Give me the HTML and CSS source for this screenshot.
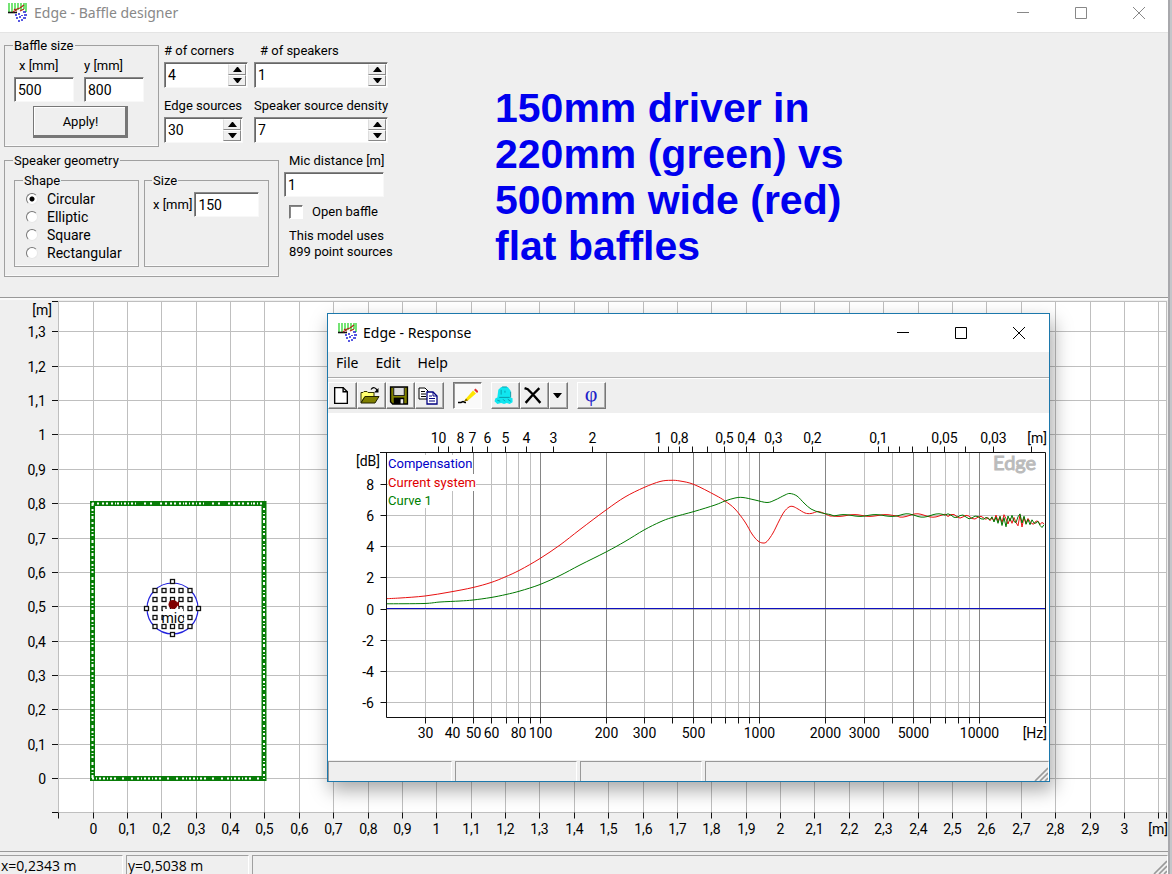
FILE: index.html
```html
<!DOCTYPE html>
<html lang="en">
<head>
<meta charset="utf-8">
<meta name="viewport" content="width=device-width, initial-scale=1">
<title>Edge - Baffle designer</title>
<link rel="stylesheet" href="styles.css">
</head>
<body>
<svg class="defs" aria-hidden="true">
  <symbol id="logo" viewBox="0 0 20 20">
    <path d="M1 0v9M4 0v9M7 0v7M10 0v7M13 0v7M16 0v6M18 0v9" stroke="#2bd52b" stroke-width="1.3"/>
    <path d="M0 9.500h9" stroke="#111" stroke-width="1.600"/>
    <path d="M5 9l4-3 3-1 4-3M6 6l3 2M12 8l4-2" stroke="#b02818" stroke-width="1.300" fill="none"/>
    <path d="M7 12h2M10 11h2M15 9h3M16 12h3M8 15h2M11 14h2M15 15h3M10 18h2M13 17h2M14 12v1" stroke="#2222d8" stroke-width="1.600"/>
  </symbol>
  <symbol id="min" viewBox="0 0 12 12"><path d="M0 5.500h12" stroke="currentColor"/></symbol>
  <symbol id="max" viewBox="0 0 12 12"><path d="M.5.500h11v11H.500z" fill="none" stroke="currentColor"/></symbol>
  <symbol id="close" viewBox="0 0 12 12"><path d="M0 0l12 12M12 0L0 12" stroke="currentColor"/></symbol>
  <symbol id="up" viewBox="0 0 9 5"><path d="M0 5h9L5 0H4z"/></symbol>
  <symbol id="down" viewBox="0 0 9 5"><path d="M0 0h9L5 5H4z"/></symbol>
  <symbol id="grip" viewBox="0 0 14 14"><path d="M1 14L14 1M6 14l8-8M11 14l3-3" stroke="#999" stroke-width="1.600"/></symbol>
</svg>

<main class="app">
  <header class="titlebar inactive">
    <svg class="logo"><use href="#logo"/></svg>
    <h1 class="title">Edge - Baffle designer</h1>
    <button class="winbtn" aria-label="Minimize"><svg><use href="#min"/></svg></button>
    <button class="winbtn" aria-label="Maximize"><svg><use href="#max"/></svg></button>
    <button class="winbtn" aria-label="Close"><svg><use href="#close"/></svg></button>
  </header>

  <form class="panel" onsubmit="return false">
    <div class="settings">
      <div class="row">
        <fieldset class="group baffle">
          <legend>Baffle size</legend>
          <div class="pair">
            <div class="dim"><label for="bx">x [mm]</label><input class="box" id="bx" value="500"></div>
            <div class="dim y"><label for="by">y [mm]</label><input class="box" id="by" value="800"></div>
          </div>
          <button class="apply">Apply!</button>
        </fieldset>
        <div class="spins">
          <div class="field">
            <label for="corners"># of corners</label>
            <div class="spin"><input id="corners" value="4"><span class="arrows"><button aria-label="More corners"><svg><use href="#up"/></svg></button><button aria-label="Fewer corners"><svg><use href="#down"/></svg></button></span></div>
          </div>
          <div class="field">
            <label class="indent" for="speakers"># of speakers</label>
            <div class="spin"><input id="speakers" value="1"><span class="arrows"><button aria-label="More speakers"><svg><use href="#up"/></svg></button><button aria-label="Fewer speakers"><svg><use href="#down"/></svg></button></span></div>
          </div>
          <div class="field">
            <label for="edges">Edge sources</label>
            <div class="spin narrow"><input id="edges" value="30"><span class="arrows"><button aria-label="More edge sources"><svg><use href="#up"/></svg></button><button aria-label="Fewer edge sources"><svg><use href="#down"/></svg></button></span></div>
          </div>
          <div class="field">
            <label for="density">Speaker source density</label>
            <div class="spin"><input id="density" value="7"><span class="arrows"><button aria-label="Higher density"><svg><use href="#up"/></svg></button><button aria-label="Lower density"><svg><use href="#down"/></svg></button></span></div>
          </div>
        </div>
      </div>
      <div class="row">
        <fieldset class="group geometry">
          <legend>Speaker geometry</legend>
          <fieldset class="group shape">
            <legend>Shape</legend>
            <label class="choice"><input type="radio" name="shape" checked>Circular</label>
            <label class="choice"><input type="radio" name="shape">Elliptic</label>
            <label class="choice"><input type="radio" name="shape">Square</label>
            <label class="choice"><input type="radio" name="shape">Rectangular</label>
          </fieldset>
          <fieldset class="group size">
            <legend>Size</legend>
            <div class="inline"><label for="sx">x [mm]</label><input class="box" id="sx" value="150"></div>
          </fieldset>
        </fieldset>
        <div class="mic">
          <label class="mic-label" for="mic">Mic distance [m]</label>
          <input class="box" id="mic" value="1">
          <label class="check"><input type="checkbox">Open baffle</label>
          <p class="note">This model uses<br>899 point sources</p>
        </div>
      </div>
    </div>
    <p class="headline">150mm driver in<br>220mm (green) vs<br>500mm wide (red)<br>flat baffles</p>
  </form>

  <div class="plot"><svg id="baffle" role="img" aria-label="Baffle drawing"></svg></div>

  <footer class="status">
    <span class="cell">x=0,2343 m</span>
    <span class="cell">y=0,5038 m</span>
    <span class="cell wide"><svg class="grip"><use href="#grip"/></svg></span>
  </footer>
</main>

<section class="response">
  <header class="titlebar">
    <svg class="logo"><use href="#logo"/></svg>
    <h2 class="title">Edge - Response</h2>
    <button class="winbtn" aria-label="Minimize"><svg><use href="#min"/></svg></button>
    <button class="winbtn" aria-label="Maximize"><svg><use href="#max"/></svg></button>
    <button class="winbtn" aria-label="Close"><svg><use href="#close"/></svg></button>
  </header>
  <nav class="menu"><button>File</button><button>Edit</button><button>Help</button></nav>
  <div class="tools">
    <div class="toolset">
      <button class="tool" aria-label="New"><svg viewBox="0 0 18 18"><path d="M3 1.500h8l4 4v11H3z" fill="#fff" stroke="#000" stroke-width="1.300"/><path d="M11 1.500v4h4" fill="none" stroke="#000" stroke-width="1.300"/></svg></button>
      <button class="tool" aria-label="Open"><svg viewBox="0 0 20 18"><path d="M1 16V6h2l1-1h3l1 1h6v4H5z" fill="#ffff70" stroke="#333300"/><path d="M1 16.500L5 10h14l-4 6.500z" fill="#808000" stroke="#222200"/><path d="M11 3c2-3 5-2 6 1" fill="none" stroke="#000" stroke-width="1.200"/><path d="M18.500 1.500V6H14z"/></svg></button>
      <button class="tool" aria-label="Save"><svg viewBox="0 0 18 18"><path d="M1 1h16v16H3l-2-2z" fill="#808000" stroke="#000" stroke-width="1.300"/><path d="M4 1.500h10V9H4z" fill="#ddd" stroke="#222"/><path d="M4 11h10v6H4z"/><path d="M10.500 12.500h2.500v4h-2.500z" fill="#eee"/></svg></button>
      <button class="tool" aria-label="Copy"><svg viewBox="0 0 20 18"><path d="M1 1.500h6l3 3v8H1z" fill="#fff" stroke="#000"/><path d="M3 5h4M3 7.500h5M3 10h5" stroke="#000"/><path d="M9 5.500h6l4 4v8H9z" fill="#fff" stroke="#000080" stroke-width="1.300"/><path d="M15 5.500v4h4M11 9.500h3M11 12h6M11 14.500h6" fill="none" stroke="#000080"/></svg></button>
    </div>
    <div class="toolset">
      <button class="tool pressed" aria-label="Draw" aria-pressed="true"><svg viewBox="0 0 20 18"><path d="M8 12l7-8 3 3-8 7-4 1z" fill="#ffe600"/><path d="M16 3.500l1.500-1.500 3 3-1.500 1.500z" fill="#e03030"/><path d="M6 15l2-3 2 2z" fill="#806000"/><path d="M0 16h3l2-1 2 1h1" fill="none" stroke="#000" stroke-width="1.500"/></svg></button>
    </div>
    <div class="toolset">
      <button class="tool" aria-label="Store curve"><svg viewBox="0 0 20 20"><path d="M4 4l3-3h7l3 4v7l2 1v4l-3 2-3-1-3 1-3-1-4 1-3-3 1-3 2-1z" fill="#10e6f0"/><path d="M7 4v5M11 5v2M5 12h11M3 15l3 1M9 14l2 2M14 14l3 2M8 1h5M17 6v6" stroke="#089aa8" fill="none"/></svg></button>
      <button class="tool" aria-label="Delete curve"><svg viewBox="0 0 18 18"><path d="M1 2l3 1 5 5 7 8M15 2L9 8l-7 8" fill="none" stroke="#000" stroke-width="2.200"/></svg></button>
      <button class="tool slim" aria-label="Choose curve"><svg viewBox="0 0 9 5"><path d="M0 0h9L5 5H4z"/></svg></button>
    </div>
    <div class="toolset">
      <button class="tool phi" aria-label="Phase">φ</button>
    </div>
  </div>
  <svg class="chart" id="chart" viewBox="0 0 721 346" role="img" aria-label="Frequency response"></svg>
  <footer class="resp-status">
    <span></span><span></span><span></span><span class="wide"><svg class="grip"><use href="#grip"/></svg></span>
  </footer>
</section>
<script src="plots.js"></script>
</body>
</html>
```
FILE: styles.css
```css
* { box-sizing: border-box; }
body { margin: 0; height: 100vh; background: #c4c6ca; font: 13px/16px Roboto, "Liberation Sans", sans-serif; color: #000; overflow: hidden; }
button, input { font: inherit; color: inherit; margin: 0; border-radius: 0; }
h1, h2, p { margin: 0; }
fieldset { margin: 0; padding: 0; min-width: 0; }
.defs { position: absolute; width: 0; height: 0; }

.app { display: flex; flex-direction: column; height: 100vh; margin-right: 2px; background: #efefef; border-right: 2px solid #a8a8ac; }
.titlebar { display: flex; align-items: center; flex: none; background: #fff; color: #000; padding: 0 1px 0 10px; }
.inactive { height: 33px; color: #888; border-bottom: 1px solid #e4e4e4; padding: 0 0 7px 8px; }
.logo { width: 20px; height: 20px; flex: none; }
.title { flex: 1; margin-left: 6px; font: 14px/20px "Noto Sans", "Open Sans", sans-serif; }
.winbtn { display: flex; align-items: center; justify-content: center; width: 58px; height: 26px; padding: 0; border: 0; background: none; }
.winbtn svg { width: 12px; height: 12px; }

.panel { display: flex; flex: none; height: 265px; padding: 3px 0 0 4px; border-bottom: 1px solid #999; }
.settings { display: flex; flex-direction: column; gap: 4px; width: 424px; flex: none; }
.row { display: flex; }
.group { border: 1px solid #a0a0a0; box-shadow: inset 0 -1px #fafafa; padding: 0 9px; }
.group legend { padding: 2px 1px 0; margin: 0 0 -2px -1px; }
.baffle { width: 155px; padding-top: 6px; padding-bottom: 8px; }
.pair { display: flex; gap: 10px; }
.dim { display: flex; flex-direction: column; gap: 3px; width: 60px; }
.dim label { padding-left: 5px; }
.dim.y label { padding-left: 0; }
.box, .spin { width: 100%; height: 25px; background: #fff; border: 1px solid; border-color: #888 #f8f8f8 #f8f8f8 #888; box-shadow: inset 1px 1px #666; padding: 0 3px; font-size: 14px; }
.apply { display: block; width: 95px; height: 32px; margin: 4px 0 0 19px; padding: 0; background: #efefef; border: 1px solid #777; box-shadow: inset -2px -2px #777, inset 1px 1px #fff; }
.spins { display: grid; grid-template-columns: 84px 140px; gap: 10px 6px; align-content: start; padding: 7px 0 0 5px; }
.field { display: flex; flex-direction: column; gap: 3px; }
.field label { white-space: nowrap; }
.indent { padding-left: 6px; }
.spin { display: flex; width: 134px; height: 26px; padding: 1px 1px 1px 3px; }
.field:nth-child(odd) .spin { width: 84px; }
.field:nth-child(odd) .narrow { width: 79px; }
.spin input { flex: 1; min-width: 0; border: 0; padding: 0; background: none; }
.arrows { display: flex; flex-direction: column; width: 18px; flex: none; }
.arrows button { flex: 1; display: flex; align-items: center; justify-content: center; padding: 0; background: #efefef; border: 1px solid; border-color: #fff #888 #888 #ddd; }
.arrows svg { width: 9px; height: 5px; flex: none; }

.geometry { display: flex; gap: 5px; width: 275px; padding-top: 4px; padding-bottom: 9px; }
.shape { width: 125px; height: 96px; padding-top: 3px; }
.size { width: 125px; height: 96px; padding-top: 5px; padding-left: 8px; }
.choice { display: flex; align-items: center; gap: 9px; height: 18px; padding-left: 2px; font-size: 14px; }
.choice input { appearance: none; width: 12px; height: 12px; border: 1px solid; border-color: #777 #e8e8e8 #e8e8e8 #777; border-radius: 50%; background: #fff; }
.choice input:checked { background: radial-gradient(circle, #000 0 2px, #fff 3px); }
.inline { display: flex; align-items: center; gap: 2px; }
.inline label { white-space: nowrap; }
.mic { display: flex; flex-direction: column; padding: 2px 0 0 5px; width: 135px; }
.mic-label { padding: 0 0 3px 5px; white-space: nowrap; }
.mic .box { width: 100px; }
.check { display: flex; align-items: center; gap: 9px; padding: 7px 0 8px 5px; }
.check input { appearance: none; width: 14px; height: 14px; background: #fff; border: 1px solid; border-color: #777 #fff #fff #777; box-shadow: inset 1px 1px #888; }
.note { padding-left: 5px; white-space: nowrap; }
.headline { margin: 49px 0 0 67px; color: #0000ee; font: bold 41px/46px "Liberation Sans", Arial, sans-serif; white-space: nowrap; }

.plot { flex: 1; min-height: 0; border-top: 2px solid #fafafa; }
.plot svg { display: block; width: 100%; height: 100%; }
.status { display: flex; gap: 3px; flex: none; height: 23px; padding-top: 3px; border-top: 1px solid #999; background: #efefef; font: 14px/20px "Open Sans", "Noto Sans", sans-serif; }
.cell { width: 123px; padding-left: 1px; border-top: 1px solid #a0a0a0; border-left: 1px solid #a0a0a0; border-right: 1px solid #fff; white-space: nowrap; }
.cell:first-child { border-left: 0; }
.status .wide, .resp-status .wide { width: auto; flex: 1; display: flex; align-items: flex-end; justify-content: flex-end; }
.grip { width: 14px; height: 14px; }

.response { position: absolute; left: 327px; top: 313px; width: 723px; display: flex; flex-direction: column; background: #efefef; border: 1px solid #1c78ac; box-shadow: 3px 8px 18px rgba(0, 0, 0, .35); }
.response .titlebar { height: 38px; }
.response .title { margin-left: 5px; }
.menu { display: flex; gap: 17px; height: 26px; padding: 0 8px 3px; border-bottom: 1px solid #aaa; font: 14px/20px "Noto Sans", "Open Sans", sans-serif; }
.menu button { padding: 0; border: 0; background: none; }
.tools { display: flex; gap: 9px; height: 35px; padding: 3px 0 4px; border-top: 1px solid #fff; }
.toolset { display: flex; }
.tool { display: flex; align-items: center; justify-content: center; width: 29px; padding: 0 3px 0 0; background: #efefef; border: 1px solid; border-color: #fff #777 #777 #fff; box-shadow: inset -1px -1px #aaa; }
.tool svg { width: 20px; height: 19px; flex: none; }
.tool.pressed { background: #fafafa; border-color: #777 #fff #fff #777; box-shadow: inset 1px 1px #999; padding: 0; }
.tool.slim { width: 19px; }
.tool.slim svg { width: 9px; height: 5px; }
.tool.phi { font: 22px/20px "Liberation Serif", serif; color: #2020c8; padding: 0 1px 4px 0; }
.chart { display: block; width: 100%; background: #fff; }
.resp-status { display: flex; gap: 3px; height: 22px; padding-top: 1px; border-top: 1px solid #fff; }
.resp-status span { width: 122px; border-top: 1px solid #999; border-left: 1px solid #999; border-right: 1px solid #fff; }
.resp-status span:first-child { width: 124px; }

svg text { font: 14px Roboto, "Liberation Sans", sans-serif; fill: #000; }
svg .mid { text-anchor: middle; }
svg .end { text-anchor: end; }
svg .legend { font-size: 13px; }
svg .blue { fill: #0000c8; }
svg .red { fill: #e00000; }
svg .green { fill: #008000; }
svg .mark { fill: #bbb; font: 20px Lato, sans-serif; stroke: #bbb; }
.grid { stroke: #bfbfbf; }
.dark { stroke: #858585; }
.axis { stroke: #111; fill: none; }
.curve { fill: none; stroke-width: 1; }
.curve.r { stroke: #e81010; }
.curve.g { stroke: #007800; }
.zero { stroke: #1010c0; stroke-width: 1; }
```
FILE: plots.js
```js
const line = (x1, y1, x2, y2, c) => `<path class="${c}" d="M${x1} ${y1}L${x2} ${y2}"/>`;
const snap = v => Math.round(v - 0.5) + 0.5;
const text = (x, y, s, c) => `<text x="${x}" y="${y}" class="${c}">${s}</text>`;
const comma = n => String(+n.toFixed(2)).replace('.', ',');

function drawBaffle() {
  const svg = document.getElementById('baffle');
  const w = svg.clientWidth, h = svg.clientHeight;
  const left = 58.5, top = 1.5, right = w - 1.5, bottom = h - 38.5;
  const x0 = 93, y0 = 478.7, unit = 34.38;
  let s = `<rect x="${left}" y="${top}" width="${right - left}" height="${bottom - top}" fill="#fff" class="grid"/>`;
  for (let i = 0; x0 + i * unit < right; i++) {
    const x = snap(x0 + i * unit);
    s += line(x, top, x, bottom, 'grid') + line(x, bottom, x, bottom + 6, 'axis');
    if (x < right - 24) s += text(x, bottom + 21, comma(i / 10), 'mid');
  }
  for (let i = 0; y0 - i * unit > top + 8; i++) {
    const y = snap(y0 - i * unit);
    s += line(left, y, right, y, 'grid') + line(52, y, 58, y, 'axis');
    s += text(46, y + 5, comma(i / 10), 'end');
  }
  s += line(52, top, 58, top, 'axis') + line(52, bottom, 58, bottom, 'axis');
  s += line(left, bottom, left, bottom + 6, 'axis') + line(right, bottom, right, bottom + 6, 'axis');
  s += text(52, 15, '[m]', 'end') + text(w, bottom + 21, '[m]', 'end');

  s += `<rect x="92.500" y="203.500" width="171.500" height="275" fill="none" stroke="#087c08" stroke-width="5"/>`;
  s += `<g stroke="#fff" stroke-width="2"><path d="M92 203.500H264" stroke-dasharray="2 3 2 3 2 2 2 3 2 2 1 1 2 2 1 2 2 2 1 2 2 2 1 8 2 4 2 8"/>
    <path d="M92 478.500H264" stroke-dasharray="2 2 1 2 2 2 2 2 1 2 2 2 2 6 2 7 2 4"/>
    <path d="M92.500 203V479" stroke-dasharray="3 3 2 2 1 2 3 3 2 3 2 2 1 2 2 4"/>
    <path d="M264 208V479" stroke-dasharray="2 3 1 2 2 2 3 3 2 2 1 2 2 4"/></g>`;

  const cx = 172.5, cy = 308.5;
  s += `<circle cx="${cx}" cy="${cy}" r="25.500" fill="#fff" stroke="#2222dd" stroke-width="1.200"/>`;
  const box = (x, y) => `<rect x="${x - 2}" y="${y - 2}" width="4" height="4" fill="#fff" stroke="#111" stroke-width="1.300"/>`;
  for (let r = -2; r <= 2; r++) for (let c = -2; c <= 2; c++) s += box(cx + c * 9 - Math.sign(c) * 0.5, cy + r * 9);
  s += box(cx, cy - 27) + box(cx, cy + 26) + box(cx - 26, cy) + box(cx + 26, cy);
  s += `<rect x="163" y="309" width="20" height="14" fill="#fff"/>`;
  s += `<circle cx="173" cy="304.500" r="4.500" fill="#800000"/><path d="M175 304l4-3v6z" fill="#800000"/>`;
  s += text(cx + 0.5, 323, 'mic', 'mid');
  svg.innerHTML = s;
}

const redPts = [[58,185.7],[72,185],[97,183],[122,179],[145,174.5],[163,169.5],[177,164],[192,157],[212,145.5],[232,132],[252,116.5],[278,97],[297,84],[316,74.500],[332,68.500],[343,67.300],[352,68],[366,71.500],[387,82],[397,88],[407,96],[417,109],[424,121],[430,128],[435,130],[439,128.500],[445,120],[451,108],[456,99],[461,94],[465,93.500],[470,96],[477,100],[483,100.500],[490,98.500],[495,100],[502,103]];
const greenPts = [[58,190.8],[96,190.500],[112,189],[132,188],[145,187],[163,184.500],[178,181.500],[192,178],[212,171.500],[232,162.500],[252,152],[278,139],[297,128.500],[316,117],[332,109],[344,104.500],[366,98.500],[387,92],[397,88],[407,85],[415,84.500],[427,87],[439,89.500],[447,87],[457,82],[462,80.500],[469,83],[476,90],[483,96],[492,99.500],[502,101.500]];
// Vertical deviation of the ragged treble end, one value per 2 px from x = 656.
const redNoise = [0,1,-1,2,-1,2,-4,2,-3,3,-5,-1,4,-2,3,-3,2,5,-6,6,-4,2,-3,0,2,2,-1,-1,2,0,1];
const greenNoise = [1,-1,0,1,-2,3,-2,4,-3,6,-2,7,-4,1,-5,1,2,-4,-7,2,-5,3,-2,3,-2,1,1,-1,3,5,2];

function curve(points, noise, phase, cls) {
  let d = `M${points[0]}`;
  for (let i = 0; i < points.length - 1; i++) {
    const a = points[i - 1] || points[i], b = points[i], c = points[i + 1], e = points[i + 2] || c;
    d += `C${b[0] + (c[0] - a[0]) / 6} ${b[1] + (c[1] - a[1]) / 6} ${c[0] - (e[0] - b[0]) / 6} ${c[1] - (e[1] - b[1]) / 6} ${c}`;
  }
  const base = x => x < 620 ? 102.5 : 102.5 + (x - 620) * 0.075;
  for (let x = 506; x < 656; x += 3) {
    const amp = x < 570 ? 0.9 : 1.7, freq = x < 620 ? 0.2 : 0.45;
    d += `L${x} ${(base(x) + amp * Math.sin(x * freq + phase)).toFixed(1)}`;
  }
  noise.forEach((v, i) => { d += `L${656 + i * 2} ${(base(656 + i * 2) + v).toFixed(1)}`; });
  return `<path class="curve ${cls}" d="${d}"/>`;
}

function drawResponse() {
  const L = 58.5, R = 717.5, T = 39.5, B = 304.5;
  const fx = f => L + Math.log10(f / 20) * 219.7;
  const dy = v => 196 - v * 15.6;
  const labels = [30, 40, 50, 60, 80, 100, 200, 300, 500, 1000, 2000, 3000, 5000, 10000];
  const dark = [50, 100, 200, 500, 1000, 2000, 5000, 10000];
  let light = '', strong = '', ticks = '';
  for (const decade of [10, 100, 1000, 10000]) for (let n = 1; n < 10; n++) {
    const f = n * decade;
    if (f <= 20 || f >= 20000) continue;
    const x = snap(fx(f));
    if (dark.includes(f)) strong += line(x, T, x, B, 'dark'); else light += line(x, T, x, B, 'grid');
    ticks += line(x, B, x, B + 6, 'axis');
    if (labels.includes(f)) ticks += text(x, 325, f, 'mid');
  }
  for (let v = -6; v <= 8; v += 2) {
    const y = snap(dy(v));
    light += line(L, y, R, y, 'grid');
    ticks += line(L - 6, y, L, y, 'axis') + text(46, y + 5, v, 'end');
  }
  const waves = [10, 8, 7, 6, 5, 4, 3, 2, 1, 0.8, 0.5, 0.4, 0.3, 0.2, 0.1, 0.05, 0.03];
  for (const unit of [1000, 100, 10, 1]) for (let n = 9; n > 0; n--) {
    const m = n * unit / 100, x = snap(fx(346.5 / m));
    if (m > 10 || m < 0.02) continue;
    ticks += line(x, T - 6, x, T, 'axis');
    if (waves.includes(m)) ticks += text(x, 30, comma(m), 'mid');
  }
  let s = light + strong;
  s += `<path fill="#fff" d="M60 42h84v19h4v17H107v17H60z"/>`;
  s += line(L, 195.5, R, 195.5, 'zero') + curve(redPts, redNoise, 0, 'r') + curve(greenPts, greenNoise, 2, 'g');
  s += `<path class="axis" d="M52 ${T}H${R}V${B + 6}M${L} ${T}V${B}H${R}"/>` + ticks;
  s += text(52, 53, '[dB]', 'end') + text(719, 30, '[m]', 'end') + text(719, 325, '[Hz]', 'end');
  s += text(60, 55, 'Compensation', 'legend blue') + text(60, 74, 'Current system', 'legend red') + text(60, 92, 'Curve 1', 'legend green');
  s += text(665, 57, 'Edge', 'mark');
  document.getElementById('chart').innerHTML = s;
}

drawBaffle();
drawResponse();
window.addEventListener('resize', drawBaffle);
```
